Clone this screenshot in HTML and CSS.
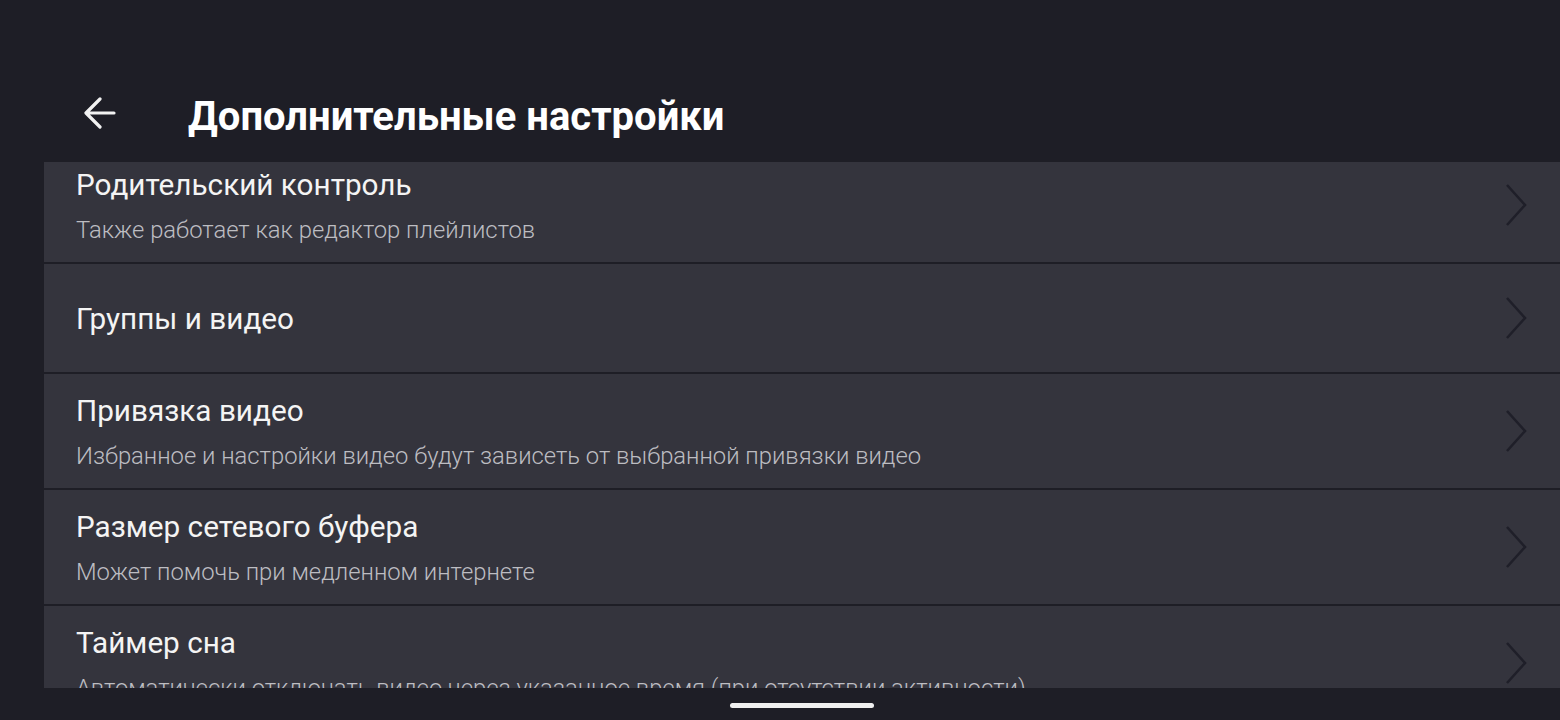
FILE: index.html
```html
<!DOCTYPE html>
<html lang="ru">
<head>
<meta charset="utf-8">
<link rel="stylesheet" href="styles.css">
</head>
<body>
<div class="screen">
  <header class="topbar">
    <button class="back" aria-label="Назад">
      <svg width="34" height="34" viewBox="0 0 34 34"><path d="M32 16H4.5M18 2 4 16 18 30" fill="none" stroke="#f2f2f2" stroke-width="3.2" stroke-linecap="round" stroke-linejoin="round"/></svg>
    </button>
    <h1 class="title">Дополнительные настройки</h1>
  </header>
  <main class="list-wrap">
    <ul class="list">
      <li class="item">
        <div class="text"><div class="name">Родительский контроль</div><div class="desc">Также работает как редактор плейлистов</div></div>
        <svg class="chev" width="24" height="44" viewBox="0 0 24 44"><path d="M3 2 21 22 3 42" fill="none" stroke="#1f1f29" stroke-width="2.6"/></svg>
      </li>
      <li class="item single">
        <div class="text"><div class="name">Группы и видео</div></div>
        <svg class="chev" width="24" height="44" viewBox="0 0 24 44"><path d="M3 2 21 22 3 42" fill="none" stroke="#1f1f29" stroke-width="2.6"/></svg>
      </li>
      <li class="item">
        <div class="text"><div class="name">Привязка видео</div><div class="desc">Избранное и настройки видео будут зависеть от выбранной привязки видео</div></div>
        <svg class="chev" width="24" height="44" viewBox="0 0 24 44"><path d="M3 2 21 22 3 42" fill="none" stroke="#1f1f29" stroke-width="2.6"/></svg>
      </li>
      <li class="item">
        <div class="text"><div class="name">Размер сетевого буфера</div><div class="desc">Может помочь при медленном интернете</div></div>
        <svg class="chev" width="24" height="44" viewBox="0 0 24 44"><path d="M3 2 21 22 3 42" fill="none" stroke="#1f1f29" stroke-width="2.6"/></svg>
      </li>
      <li class="item">
        <div class="text"><div class="name">Таймер сна</div><div class="desc">Автоматически отключать видео через указанное время (при отсутствии активности)</div></div>
        <svg class="chev" width="24" height="44" viewBox="0 0 24 44"><path d="M3 2 21 22 3 42" fill="none" stroke="#1f1f29" stroke-width="2.6"/></svg>
      </li>
    </ul>
  </main>
  <footer class="navbar"><span class="handle"></span></footer>
</div>
</body>
</html>
```
FILE: styles.css
```css
* { box-sizing: border-box; }
html, body { margin: 0; padding: 0; }
body {
  background: #1e1e26;
  font-family: Roboto, "Noto Sans", "Liberation Sans", sans-serif;
  color: #f2f2f2;
}
.screen {
  width: 1560px;
  height: 720px;
  display: flex;
  flex-direction: column;
  overflow: hidden;
}
.topbar {
  height: 162px;
  flex: none;
  display: flex;
  align-items: center;
  padding: 70px 0 0 82px;
}
.back {
  background: none;
  border: 0;
  padding: 0;
  width: 34px;
  height: 34px;
  display: flex;
  margin-right: 72px;
  margin-top: -4px;
}
.title {
  margin: 0;
  font-size: 40px;
  font-weight: 700;
  color: #ffffff;
  letter-spacing: 0;
}
.list-wrap {
  height: 526px;
  flex: none;
  margin-left: 44px;
  overflow: hidden;
}
.list {
  list-style: none;
  margin: -14px 0 0 0;
  padding: 0;
  display: flex;
  flex-direction: column;
  gap: 2px;
}
.item {
  background: #34343d;
  height: 114px;
  display: flex;
  align-items: center;
  padding: 0 32px 0 32px;
}
.item.single { height: 108px; }
.text { flex: 1; display: flex; flex-direction: column; }
.name {
  font-size: 29.7px;
  line-height: 36px;
  color: #f4f4f4;
}
.single .name { margin-top: 2px; }
.desc {
  font-size: 23.8px;
  font-weight: 300;
  line-height: 28px;
  margin-top: 13px;
  color: #bdbdc2;
  white-space: nowrap;
}
.chev { flex: none; margin-top: 0; }
.navbar {
  flex: 1;
  display: flex;
  justify-content: center;
  padding-top: 15px;
  padding-left: 44px;
}
.handle {
  width: 144px;
  height: 5px;
  border-radius: 3px;
  background: #f0f0f0;
}
```
